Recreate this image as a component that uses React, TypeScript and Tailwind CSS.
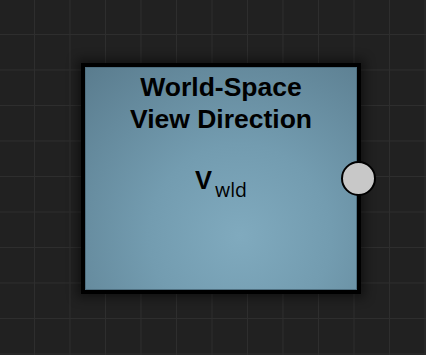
export default function App() {
  return (
    <div className="w-[426px] h-[355px] overflow-hidden bg-[#212121] bg-[linear-gradient(to_right,#2e2e2e_1px,transparent_1px),linear-gradient(to_bottom,#2e2e2e_1px,transparent_1px)] bg-[size:35.5px_35.5px] bg-[position:34px_34px] pl-[81px] pt-[63px]">
      <div className="relative w-[280px] h-[231px] border-4 border-black shadow-[0_0_10px_4px_rgba(0,0,0,0.45)]">
        <div className="w-full h-full border border-[#4f6f80] bg-[radial-gradient(circle_at_57%_76%,#80aabe_0%,#739cb0_40%,#5a7c8e_100%)] flex flex-col items-center pt-[3px]">
          <div className="text-center text-black font-bold text-[26.5px] leading-[32px] font-['Liberation_Sans',Arial,sans-serif]">
            <div>World-Space</div>
            <div>View Direction</div>
          </div>
          <div className="mt-[31px] flex items-baseline text-black">
            <span className="font-bold text-[25.5px] leading-[29px] font-['Liberation_Sans',Arial,sans-serif]">V</span>
            <span className="relative top-[8px] ml-[3px] text-[19.5px] leading-[24px] font-['Open_Sans',sans-serif]">wld</span>
          </div>
        </div>
        <div className="absolute left-[256px] top-[94px] w-[35px] h-[35px] rounded-full bg-[#c8c8c8] border-2 border-black" />
      </div>
    </div>
  );
}
